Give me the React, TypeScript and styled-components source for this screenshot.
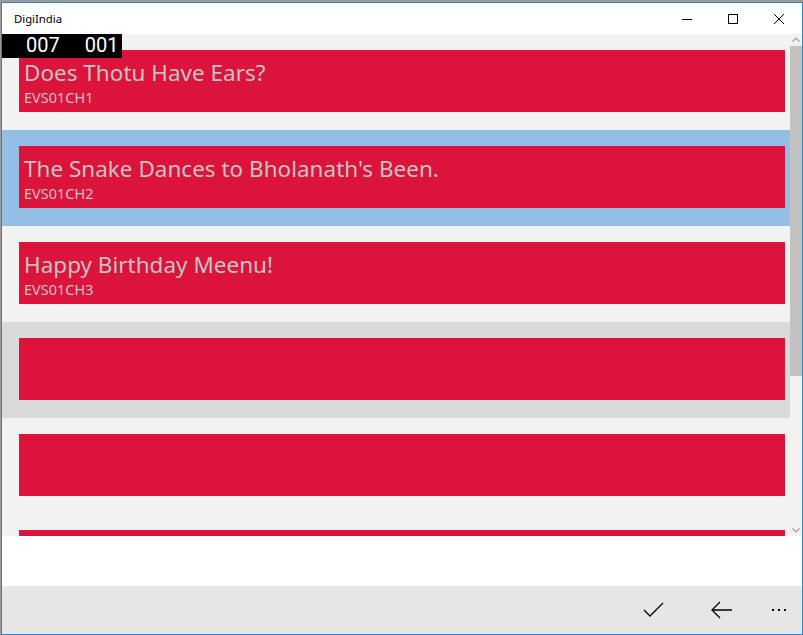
import React from "react";
import styled, { createGlobalStyle } from "styled-components";

const GlobalStyle = createGlobalStyle`
  html, body { margin: 0; padding: 0; }
  body {
    background: #9a9a9a;
    width: 803px;
    height: 635px;
    overflow: hidden;
    font-family: "Noto Sans", "Open Sans", sans-serif;
  }
  * { box-sizing: border-box; }
`;

const Window = styled.div`
  margin: 2px 0 0 1px;
  width: 802px;
  height: 633px;
  border: 1px solid #2b86d6;
  background: #ffffff;
  display: flex;
  flex-direction: column;
`;

const TitleBar = styled.div`
  height: 31px;
  flex: none;
  display: flex;
  align-items: center;
  background: #ffffff;
`;

const Title = styled.div`
  flex: 1;
  padding-left: 12px;
  font-size: 11.3px;
  color: #000;
  font-family: "Noto Sans", sans-serif;
`;

const CaptionButton = styled.div`
  width: 46px;
  height: 31px;
  display: flex;
  align-items: center;
  justify-content: center;
`;

const Content = styled.div`
  position: relative;
  flex: 1;
  display: flex;
  flex-direction: column;
`;

const ListArea = styled.div`
  height: 502px;
  flex: none;
  display: flex;
  background: #f2f2f2;
  overflow: hidden;
`;

const List = styled.div`
  flex: 1;
  display: flex;
  flex-direction: column;
  overflow: hidden;
`;

type ItemState = "normal" | "selected" | "hover";

const Item = styled.div<{ $state: ItemState }>`
  height: 96px;
  flex: none;
  padding: 16px 5px 16px 17px;
  background: ${(p) =>
    p.$state === "selected" ? "#93bfe6" : p.$state === "hover" ? "#d9d9d9" : "#f2f2f2"};
`;

const Card = styled.div`
  height: 62px;
  background: #dc143c;
  padding: 10px 0 0 5px;
  color: #c3c3c3;
  overflow: hidden;
`;

const CardTitle = styled.div`
  font-size: 22.5px;
  line-height: 25px;
  white-space: nowrap;
`;

const CardSub = styled.div`
  font-size: 14.5px;
  line-height: 24px;
  white-space: nowrap;
`;

const ScrollBar = styled.div`
  width: 12px;
  flex: none;
  display: flex;
  flex-direction: column;
  align-items: stretch;
`;

const ScrollArrow = styled.div`
  height: 12px;
  flex: none;
  display: flex;
  align-items: center;
  justify-content: center;
`;

const Track = styled.div`
  flex: 1;
  display: flex;
  flex-direction: column;
`;

const Thumb = styled.div`
  background: #c2c2c2;
`;

const Spacer = styled.div`
  height: 50px;
  flex: none;
  background: #ffffff;
`;

const AppBar = styled.div`
  height: 48px;
  flex: none;
  background: #e6e6e6;
  display: flex;
  justify-content: flex-end;
  align-items: center;
`;

const AppButton = styled.div<{ $w: number }>`
  width: ${(p) => p.$w}px;
  height: 48px;
  display: flex;
  align-items: center;
  justify-content: center;
`;

const Counter = styled.div`
  position: absolute;
  left: 0;
  top: 0;
  width: 120px;
  height: 24px;
  background: #000;
  color: #fff;
  display: flex;
  align-items: flex-start;
  padding-left: 24px;
  gap: 25px;
  font-family: Roboto, "Noto Sans", sans-serif;
  font-size: 20px;
  font-weight: 400;
  line-height: 22px;
`;

const items: { title: string; sub: string; state: ItemState }[] = [
  { title: "Does Thotu Have Ears?", sub: "EVS01CH1", state: "normal" },
  { title: "The Snake Dances to Bholanath's Been.", sub: "EVS01CH2", state: "selected" },
  { title: "Happy Birthday Meenu!", sub: "EVS01CH3", state: "normal" },
  { title: "", sub: "", state: "hover" },
  { title: "", sub: "", state: "normal" },
  { title: "", sub: "", state: "normal" },
];

export default function App() {
  return (
    <>
      <GlobalStyle />
      <Window>
        <TitleBar>
          <Title>DigiIndia</Title>
          <CaptionButton>
            <svg width="12" height="12" viewBox="0 0 12 12">
              <line x1="1" y1="6.5" x2="11" y2="6.5" stroke="#000" strokeWidth="1" />
            </svg>
          </CaptionButton>
          <CaptionButton>
            <svg width="12" height="12" viewBox="0 0 12 12">
              <rect x="1.5" y="1.5" width="9" height="9" fill="none" stroke="#000" strokeWidth="1" />
            </svg>
          </CaptionButton>
          <CaptionButton>
            <svg width="12" height="12" viewBox="0 0 12 12">
              <path d="M1 1 L11 11 M11 1 L1 11" stroke="#000" strokeWidth="1" />
            </svg>
          </CaptionButton>
        </TitleBar>
        <Content>
          <ListArea>
            <List>
              {items.map((it, i) => (
                <Item key={i} $state={it.state}>
                  <Card>
                    {it.title && <CardTitle>{it.title}</CardTitle>}
                    {it.sub && <CardSub>{it.sub}</CardSub>}
                  </Card>
                </Item>
              ))}
            </List>
            <ScrollBar>
              <ScrollArrow>
                <svg width="8" height="6" viewBox="0 0 8 6">
                  <path d="M0.5 4.5 L4 1 L7.5 4.5" fill="none" stroke="#a0a0a0" strokeWidth="1.2" />
                </svg>
              </ScrollArrow>
              <Track>
                <Thumb style={{ height: "330px" }} />
              </Track>
              <ScrollArrow>
                <svg width="8" height="6" viewBox="0 0 8 6">
                  <path d="M0.5 1.5 L4 5 L7.5 1.5" fill="none" stroke="#a0a0a0" strokeWidth="1.2" />
                </svg>
              </ScrollArrow>
            </ScrollBar>
          </ListArea>
          <Spacer />
          <AppBar>
            <AppButton $w={68}>
              <svg width="22" height="16" viewBox="0 0 22 16">
                <path d="M1 8 L7 14 L20 1" fill="none" stroke="#000" strokeWidth="1.3" />
              </svg>
            </AppButton>
            <AppButton $w={68}>
              <svg width="22" height="18" viewBox="0 0 22 18">
                <path d="M9 1 L1 9 L9 17 M1 9 L21 9" fill="none" stroke="#000" strokeWidth="1.3" />
              </svg>
            </AppButton>
            <AppButton $w={46}>
              <svg width="16" height="4" viewBox="0 0 16 4">
                <rect x="1" y="1" width="2" height="2" fill="#000" />
                <rect x="7" y="1" width="2" height="2" fill="#000" />
                <rect x="13" y="1" width="2" height="2" fill="#000" />
              </svg>
            </AppButton>
          </AppBar>
          <Counter>
            <span>007</span>
            <span>001</span>
          </Counter>
        </Content>
      </Window>
    </>
  );
}
